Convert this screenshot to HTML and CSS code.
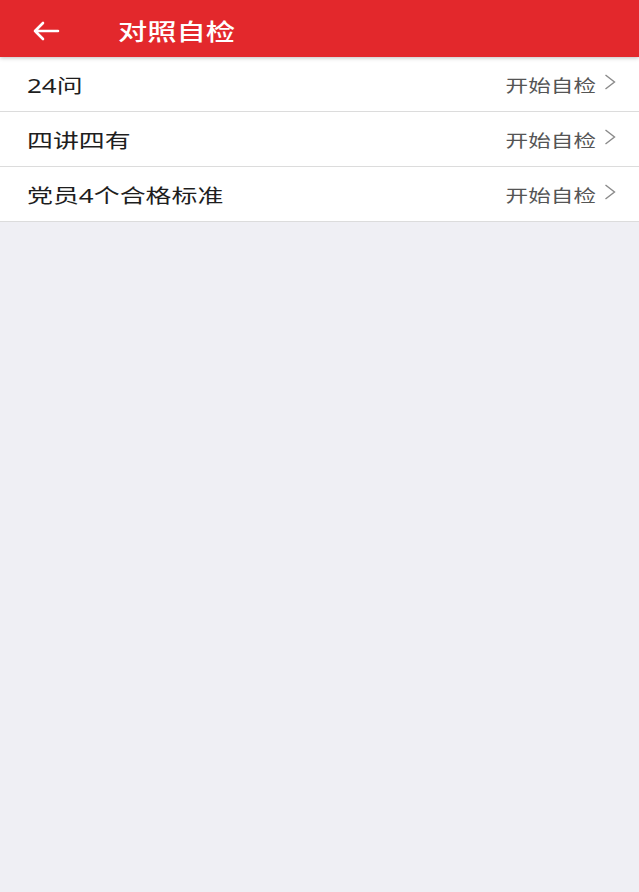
FILE: index.html
```html
<!DOCTYPE html>
<html>
<head>
    <meta charset="utf-8">
    <title>对照自检</title>
    <link rel="stylesheet" href="styles.css">
</head>
<body>
    <div class="header">
        <span class="back">
            <svg width="28" height="20" viewBox="0 0 28 20">
                <path d="M26 10H3M11 2L3 10L11 18" fill="none" stroke="#fff" stroke-width="2.6" stroke-linecap="round" stroke-linejoin="round"/>
            </svg>
        </span>
        <h1 class="title">对照自检</h1>
    </div>

    <div class="list">
        <div class="row">
            <span class="label">24问</span>
            <span class="action">开始自检</span>
            <svg class="chevron" width="12" height="16" viewBox="0 0 12 16">
                <path d="M1.5 1L10.5 8L1.5 15" fill="none" stroke="#8a8a8a" stroke-width="1.4"/>
            </svg>
        </div>
        <div class="row">
            <span class="label">四讲四有</span>
            <span class="action">开始自检</span>
            <svg class="chevron" width="12" height="16" viewBox="0 0 12 16">
                <path d="M1.5 1L10.5 8L1.5 15" fill="none" stroke="#8a8a8a" stroke-width="1.4"/>
            </svg>
        </div>
        <div class="row">
            <span class="label">党员4个合格标准</span>
            <span class="action">开始自检</span>
            <svg class="chevron" width="12" height="16" viewBox="0 0 12 16">
                <path d="M1.5 1L10.5 8L1.5 15" fill="none" stroke="#8a8a8a" stroke-width="1.4"/>
            </svg>
        </div>
    </div>
</body>
</html>
```

FILE: styles.css
```css
body {
    margin: 0;
    min-height: 100vh;
    background: #efeff4;
    font-family: "Noto Sans", "Noto Sans CJK SC", sans-serif;
}

.header {
    position: relative;
    z-index: 1;
    height: 57px;
    box-sizing: border-box;
    padding: 4px 0 0 32px;
    display: flex;
    align-items: center;
    background: #e3282c;
    box-shadow: 0 1px 4px rgba(0,0,0,0.25);
}

.back {
    display: flex;
    width: 86px;
}

/* the app text is rendered wide, so glyphs are stretched a bit */
.title {
    margin: 0;
    color: #fff;
    font-size: 22.5px;
    font-weight: 500;
    transform: scaleX(1.3);
    transform-origin: left center;
}

.list {
    background: #fff;
}

.row {
    height: 54px;
    display: flex;
    align-items: center;
    padding: 0 23px 0 27px;
    border-bottom: 1px solid #dcdcdc;
}

.label,
.action {
    display: inline-block;
    transform: scaleX(1.33);
    transform-origin: left center;
}

.label {
    margin-right: auto;
    color: #1e1e1e;
    font-size: 19.5px;
}

.action {
    color: #555;
    font-size: 17px;
    margin-right: 8px;
    transform-origin: right center;
}

.chevron {
    display: block;
    margin-top: -4px;
}
```
